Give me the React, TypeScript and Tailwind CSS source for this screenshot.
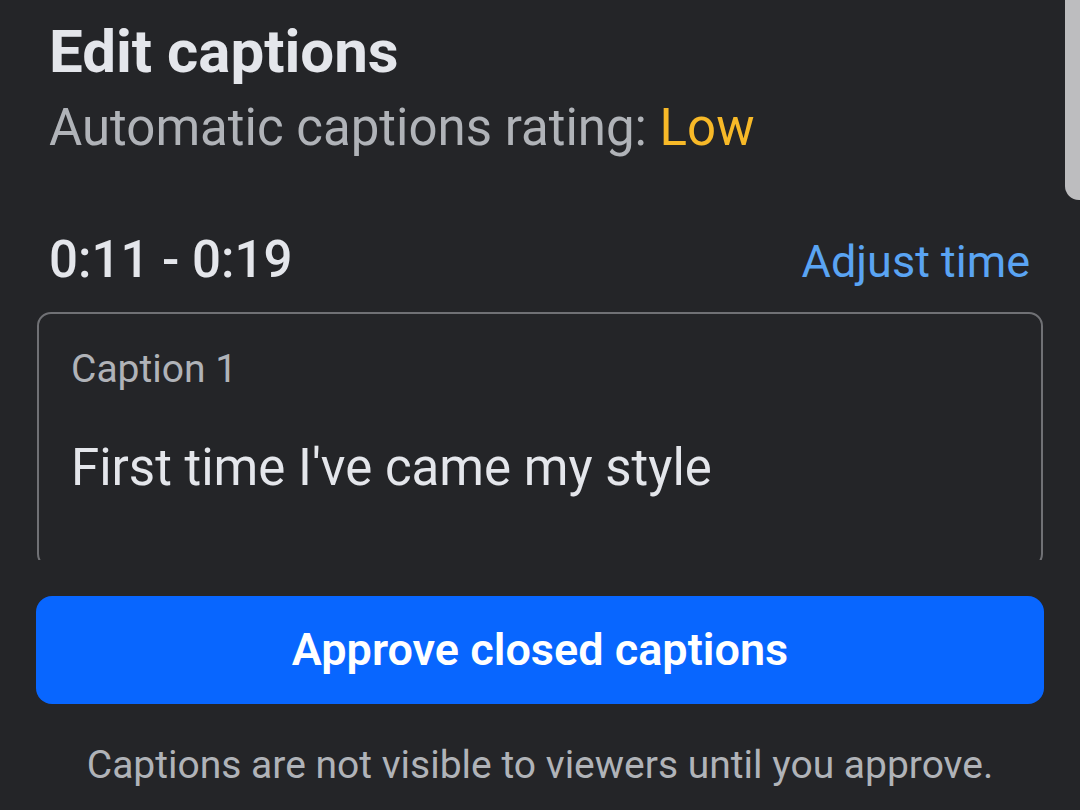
import React from "react";

export default function App() {
  return (
    <div
      className="relative w-[1080px] h-[810px] overflow-hidden bg-[#242528]"
      style={{ fontFamily: "Roboto, 'Liberation Sans', sans-serif" }}
    >
      <div className="px-[36px] pt-[22px]">
        <div className="pl-[13px] text-[60px] leading-[60px] font-bold text-[#e4e6eb]">
          Edit captions
        </div>
        <div className="pl-[13px] mt-[16px] text-[51px] leading-[60px] text-[#b0b3b8]">
          Automatic captions rating: <span className="text-[#f7b928]">Low</span>
        </div>
        <div className="mt-[72px] flex items-baseline justify-between pl-[13px] pr-[14px]">
          <div className="text-[51px] leading-[60px] font-medium text-[#e4e6eb]">0:11 - 0:19</div>
          <div className="text-[45px] leading-[60px] text-[#5aa4f3]">Adjust time</div>
        </div>
        <div className="mt-[20px] h-[248px] overflow-hidden px-[1px]">
          <div className="h-[256px] rounded-[14px] border-2 border-[#707175] pl-[32px] pt-[31px]">
            <div className="text-[39px] leading-[48px] text-[#b0b3b8]">Caption 1</div>
            <div className="mt-[45px] text-[51px] leading-[60px] text-[#e4e6eb]">
              First time I've came my style
            </div>
          </div>
        </div>
        <button className="mt-[36px] flex h-[108px] w-full items-center justify-center rounded-[16px] bg-[#0866ff] text-[45px] font-semibold text-white">
          Approve closed captions
        </button>
        <div className="mt-[37px] text-center text-[39px] leading-[48px] text-[#b0b3b8]">
          Captions are not visible to viewers until you approve.
        </div>
      </div>
      <div className="absolute right-0 top-0 h-[200px] w-[15px] rounded-bl-[14px] bg-[#bdbdbf]" />
    </div>
  );
}
